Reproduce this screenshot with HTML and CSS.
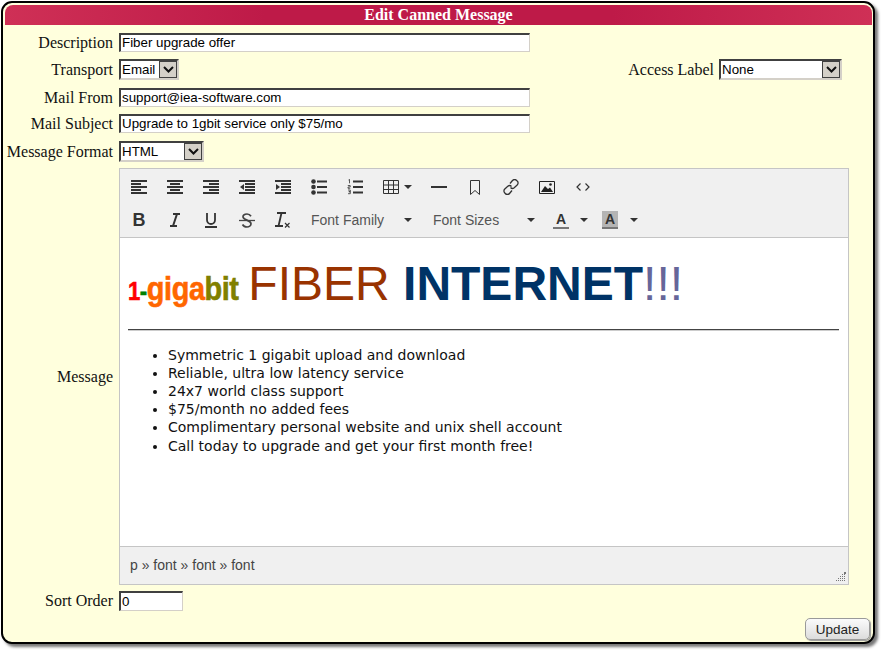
FILE: index.html
```html
<!DOCTYPE html>
<html lang="en">
<head>
<meta charset="utf-8">
<title>Edit Canned Message</title>
<link rel="stylesheet" href="styles.css">
</head>
<body>
<svg class="defs" width="0" height="0" aria-hidden="true">
  <symbol id="caret" viewBox="0 0 8 4"><path d="M0 0h8L4 4z" fill="#333"/></symbol>
</svg>
<div class="panel">
  <div class="title">Edit Canned Message</div>
  <form class="form">
    <div class="row r-desc"><label class="lbl">Description</label><input class="txt wide" value="Fiber upgrade offer"></div>
    <div class="row r-trans">
      <label class="lbl">Transport</label>
      <span class="sel sel-email"><span class="sel-val">Email</span><span class="sel-btn"><svg width="11" height="7" viewBox="0 0 11 7"><path d="M1 1l4.500 4.500L10 1" fill="none" stroke="#111" stroke-width="2"/></svg></span></span>
      <span class="access"><label class="lbl-inline">Access Label</label>
      <span class="sel sel-none"><span class="sel-val">None</span><span class="sel-btn"><svg width="11" height="7" viewBox="0 0 11 7"><path d="M1 1l4.500 4.500L10 1" fill="none" stroke="#111" stroke-width="2"/></svg></span></span></span>
    </div>
    <div class="row r-from"><label class="lbl">Mail From</label><input class="txt wide" value="support@iea-software.com"></div>
    <div class="row r-subj"><label class="lbl">Mail Subject</label><input class="txt wide" value="Upgrade to 1gbit service only $75/mo"></div>
    <div class="row r-fmt">
      <label class="lbl">Message Format</label>
      <span class="sel sel-html"><span class="sel-val">HTML</span><span class="sel-btn"><svg width="11" height="7" viewBox="0 0 11 7"><path d="M1 1l4.500 4.500L10 1" fill="none" stroke="#111" stroke-width="2"/></svg></span></span>
    </div>
    <div class="row r-msg">
      <label class="lbl">Message</label>
      <div class="editor">
        <div class="toolbar">
          <div class="tb-row">
            <span class="ib"><svg width="16" height="14" viewBox="0 0 16 14"><path d="M0 1h16M0 4h10M0 7h16M0 10h10M0 13h16" stroke="#333" stroke-width="2"/></svg></span>
            <span class="ib"><svg width="16" height="14" viewBox="0 0 16 14"><path d="M0 1h16M3 4h10M0 7h16M3 10h10M0 13h16" stroke="#333" stroke-width="2"/></svg></span>
            <span class="ib"><svg width="16" height="14" viewBox="0 0 16 14"><path d="M0 1h16M6 4h10M0 7h16M6 10h10M0 13h16" stroke="#333" stroke-width="2"/></svg></span>
            <span class="ib"><svg width="16" height="14" viewBox="0 0 16 14"><path d="M0 1h16M6 4h10M6 7h10M6 10h10M0 13h16" stroke="#333" stroke-width="2"/><path d="M5 4v6L1 7z" fill="#333"/></svg></span>
            <span class="ib"><svg width="16" height="14" viewBox="0 0 16 14"><path d="M0 1h16M6 4h10M6 7h10M6 10h10M0 13h16" stroke="#333" stroke-width="2"/><path d="M1 4v6l4-3z" fill="#333"/></svg></span>
            <span class="ib"><svg width="16" height="16" viewBox="0 0 16 16"><circle cx="2.500" cy="2.500" r="2.300" fill="#333"/><circle cx="2.500" cy="8" r="2.300" fill="#333"/><circle cx="2.500" cy="13.500" r="2.300" fill="#333"/><path d="M6 2.500h10M6 8h10M6 13.500h10" stroke="#333" stroke-width="2"/></svg></span>
            <span class="ib"><svg width="16" height="16" viewBox="0 0 16 16"><path d="M6 2.500h10M6 8h10M6 13.500h10" stroke="#333" stroke-width="2"/><path d="M1.500 1l1-.7v4M.8 6.500h2.400v1.500H1v1.300h2.300M1 11h2.300v1.700H1.800h1.500v2H1" fill="none" stroke="#333" stroke-width=".8"/></svg></span>
            <span class="ib ib-table"><svg width="16" height="14" viewBox="0 0 16 14"><path d="M.5.500h15v13H.500zM.5 5h15M.5 9.500h15M5.500.5v13M10.500.5v13" fill="none" stroke="#333"/></svg><svg class="cr" width="8" height="4"><use href="#caret"/></svg></span>
            <span class="ib"><svg width="16" height="2" viewBox="0 0 16 2"><path d="M0 1h16" stroke="#333" stroke-width="2"/></svg></span>
            <span class="ib"><svg width="10" height="15" viewBox="0 0 10 15"><path d="M.5.500h9v14L5 10.500.5 14.500z" fill="none" stroke="#333"/></svg></span>
            <span class="ib"><svg width="16" height="16" viewBox="0 0 16 16"><path d="M7 4.500l2.500-3a2.700 2.700 0 0 1 4.200 0l.5.500a2.700 2.700 0 0 1 0 4l-3 2.800a2.700 2.700 0 0 1-3.700-.3M9 11.500l-2.500 3a2.700 2.700 0 0 1-4.200 0l-.5-.5a2.700 2.700 0 0 1 0-4l3-2.800a2.700 2.700 0 0 1 3.700.3" fill="none" stroke="#333" stroke-width="1.300"/></svg></span>
            <span class="ib"><svg width="16" height="13" viewBox="0 0 16 13"><path d="M.5.500h15v12H.500z" fill="none" stroke="#222"/><path d="M2 11l4-6 3 3 2-1.500 3 4.500z" fill="#222"/><circle cx="11.500" cy="3.500" r="1.300" fill="#222"/></svg></span>
            <span class="ib"><svg width="14" height="8" viewBox="0 0 14 8"><path d="M4.500.500L1 4l3.500 3.500M9.500.5L13 4 9.500 7.500" fill="none" stroke="#333" stroke-width="1.200"/></svg></span>
          </div>
          <div class="tb-row tb-row2">
            <span class="ib"><b class="g g-b">B</b></span>
            <span class="ib"><svg width="10" height="14" viewBox="0 0 10 14"><path d="M3 1h7M0 13h7M7 1L3 13" fill="none" stroke="#333" stroke-width="2"/></svg></span>
            <span class="ib"><svg width="12" height="15" viewBox="0 0 12 15"><path d="M2 0v7a4 4 0 0 0 8 0V0M0 14h12" fill="none" stroke="#333" stroke-width="1.800"/></svg></span>
            <span class="ib"><svg width="16" height="15" viewBox="0 0 16 15"><path d="M12 3.200C11 1.500 9.500 1 8 1 5.800 1 4 2 4 3.800c0 3.700 8 3 8 7 0 2-2 3.200-4 3.200-2 0-3.500-.8-4.500-2.500" fill="none" stroke="#444" stroke-width="1.700"/><path d="M0 7.500h16" stroke="#444" stroke-width="1.300"/></svg></span>
            <span class="ib"><svg width="16" height="16" viewBox="0 0 16 16"><path d="M2 1h9M0 14h8M6.500 1L3.500 14" fill="none" stroke="#333" stroke-width="1.800"/><path d="M10 11l4.500 4.500M14.500 11L10 15.500" stroke="#333" stroke-width="1.200"/></svg></span>
            <span class="dd dd-family">Font Family</span><svg class="cr cr-family" width="8" height="4"><use href="#caret"/></svg>
            <span class="dd dd-sizes">Font Sizes</span><svg class="cr cr-sizes" width="8" height="4"><use href="#caret"/></svg>
            <span class="color c-fore"><span class="a">A</span></span><svg class="cr cr-fore" width="8" height="4"><use href="#caret"/></svg>
            <span class="color c-back"><span class="a">A</span></span><svg class="cr cr-back" width="8" height="4"><use href="#caret"/></svg>
          </div>
        </div>
        <div class="content">
          <p class="headline"><span class="brand"><span class="brand-in"><span class="b-1">1</span><span class="b-dash">-</span><span class="b-giga">giga</span><span class="b-bit">bit</span></span></span> <span class="h-fiber">FIBER</span> <span class="h-net">INTERNET</span><span class="h-ex">!!!</span></p>
          <hr class="rule">
          <ul class="bullets">
            <li>Symmetric 1 gigabit upload and download</li>
            <li>Reliable, ultra low latency service</li>
            <li>24x7 world class support</li>
            <li>$75/month no added fees</li>
            <li>Complimentary personal website and unix shell account</li>
            <li>Call today to upgrade and get your first month free!</li>
          </ul>
        </div>
        <div class="status">
          <span>p » font » font » font</span>
          <svg class="grip" width="10" height="10" viewBox="0 0 10 10"><path d="M8 0h2v2H8zM6 2h1v1H6zM8 2h1v1H8zM4 4h1v1H4zM6 4h1v1H6zM8 4h1v1H8zM2 6h1v1H2zM4 6h1v1H4zM6 6h1v1H6zM8 6h1v1H8zM0 8h1v1H0zM2 8h1v1H2zM4 8h1v1H4zM6 8h1v1H6zM8 8h1v1H8z" fill="#777"/></svg>
        </div>
      </div>
    </div>
    <div class="row r-sort"><label class="lbl">Sort Order</label><input class="txt narrow" value="0"></div>
    <div class="actions"><button type="button" class="update">Update</button></div>
  </form>
</div>
</body>
</html>
```
FILE: styles.css
```css
html, body { margin: 0; padding: 0; background: #fff; }
body { width: 881px; height: 650px; overflow: hidden; padding: 1px 0 0 1px; box-sizing: border-box; }
.defs { position: absolute; }
.panel {
  width: 874px; height: 643px; box-sizing: border-box;
  background: #ffffdd; border: 2px solid #000; border-radius: 11px;
  box-shadow: 3px 3px 3px #777; padding: 2px 1px 0 2px;
  font-family: "Liberation Serif", serif; font-size: 16px; color: #111;
}
.title {
  height: 20px; line-height: 20px; text-align: center; color: #fff; font-weight: bold; font-size: 16px;
  border-radius: 8px 8px 0 0;
  background: linear-gradient(90deg, #cf3056 0%, #be1a48 30%, #be1a48 70%, #cf3056 100%);
}
.form { display: flex; flex-direction: column; }
.row { display: flex; align-items: center; }
.lbl { width: 108px; margin-right: 6px; text-align: right; white-space: nowrap; flex: none; }
.lbl-inline { margin-right: 5px; }
.txt {
  box-sizing: border-box; height: 19px; padding: 0 1px 1px; margin: 0; background: #fff; color: #000;
  font-family: "Liberation Sans", sans-serif; font-size: 13.330px;
  border-style: solid; border-width: 2px 1px 1px 2px; border-color: #404040 #d4d0c8 #d4d0c8 #404040; outline: none;
}
.wide { width: 411px; }
.narrow { width: 64px; height: 20px; }
.r-desc { margin-top: 8px; }
.r-trans { margin-top: 7px; }
.r-from { margin-top: 8px; }
.r-subj { margin-top: 7px; }
.r-fmt { margin-top: 8px; }
.r-msg { margin-top: 6px; }
.r-sort { margin-top: 6px; }
.sel {
  display: inline-flex; box-sizing: border-box; height: 21px; background: #fff;
  border-style: solid; border-width: 2px 2px 2px 2px; border-color: #404040 #d4d0c8 #d4d0c8 #404040;
  font-family: "Liberation Sans", sans-serif; font-size: 13.330px; color: #000; line-height: 17px;
}
.sel-val { flex: 1; padding-left: 1px; }
.sel-btn {
  width: 18px; flex: none; box-sizing: border-box; background: #d4d0c8; border: 1px solid #404040;
  display: flex; align-items: center; justify-content: center;
}
.sel-email { width: 60px; }
.sel-none { width: 123px; }
.sel-html { width: 85px; }
.access { margin-left: auto; margin-right: 30px; display: flex; align-items: center; }
.editor { width: 730px; height: 417px; box-sizing: border-box; border: 1px solid #c5c5c5; display: flex; flex-direction: column; background: #fff; }
.toolbar { height: 69px; flex: none; box-sizing: border-box; background: #f0f0f0; border-bottom: 1px solid #c5c5c5; padding: 3px 0 0 0; }
.tb-row { display: flex; align-items: center; height: 30px; padding-left: 1px; }
.tb-row2 { margin-top: 3px; }
.ib { width: 36px; flex: none; display: flex; align-items: center; justify-content: center; height: 30px; }
.ib-table { width: 48px; box-sizing: border-box; padding-left: 10px; gap: 5px; justify-content: flex-start; }
.cr { display: block; flex: none; }
.g { font-family: "Liberation Sans", sans-serif; font-size: 18px; color: #333; font-weight: bold; }
.dd { font-family: "Liberation Sans", sans-serif; font-size: 14px; color: #555; white-space: nowrap; flex: none; }
.dd-family { margin-left: 10px; width: 73px; }
.cr-family { margin-left: 20px; }
.dd-sizes { margin-left: 21px; width: 66px; }
.cr-sizes { margin-left: 28px; }
.color { width: 16px; height: 18px; box-sizing: border-box; flex: none; text-align: center; font-family: "Liberation Sans", sans-serif; font-weight: bold; font-size: 14px; line-height: 16px; color: #333; border-bottom: 2px solid #777; }
.c-fore { margin-left: 18px; }
.cr-fore { margin-left: 11px; }
.c-back { margin-left: 14px; background: #b4b4b4; }
.cr-back { margin-left: 12px; }
.content { flex: 1; padding: 0 9px 0 8px; min-height: 0; }
.headline { margin: 15px 0 0; height: 62px; line-height: 62px; white-space: nowrap; font-family: "Liberation Sans", sans-serif; font-size: 48px; }
.brand { display: inline-block; width: 107px; font-family: "Liberation Sans", sans-serif; font-weight: bold; font-size: 34px; letter-spacing: -0.500px; }
.brand-in { display: inline-block; transform: scaleX(.85); transform-origin: left center; -webkit-text-stroke: .6px currentColor; }
.b-1 { color: #ff0000; font-size: 26px; }
.b-dash { color: #008000; font-size: 26px; }
.b-giga { color: #ff6600; }
.b-bit { color: #808000; }
.h-fiber { color: #993300; }
.h-net { color: #003366; font-weight: bold; }
.h-ex { color: #666699; }
.rule { margin: 14px 0 0; height: 0; border: 0; border-top: 1px solid #444; border-bottom: 1px solid #ccc; }
.bullets { margin: 14.600px 0 0; padding-left: 40px; font-family: "DejaVu Sans", sans-serif; font-size: 14px; line-height: 18.200px; color: #111; }
.status { height: 38px; flex: none; box-sizing: border-box; background: #f0f0f0; border-top: 1px solid #c5c5c5; font-family: "Liberation Sans", sans-serif; font-size: 14px; color: #444; display: flex; align-items: center; justify-content: space-between; padding: 0 2px 2px 10px; }
.grip { align-self: flex-end; margin-bottom: 0; }
.actions { display: flex; justify-content: flex-end; margin-top: 7px; padding-right: 2px; }
.update {
  width: 65px; height: 22px; padding: 0; border: 1px solid #9a9a9a; border-radius: 5px; color: #222;
  background: linear-gradient(#fbfbfb, #dcdcdc); box-shadow: 1px 1px 1px #999;
  font-family: "Liberation Sans", sans-serif; font-size: 13.500px;
}
```
